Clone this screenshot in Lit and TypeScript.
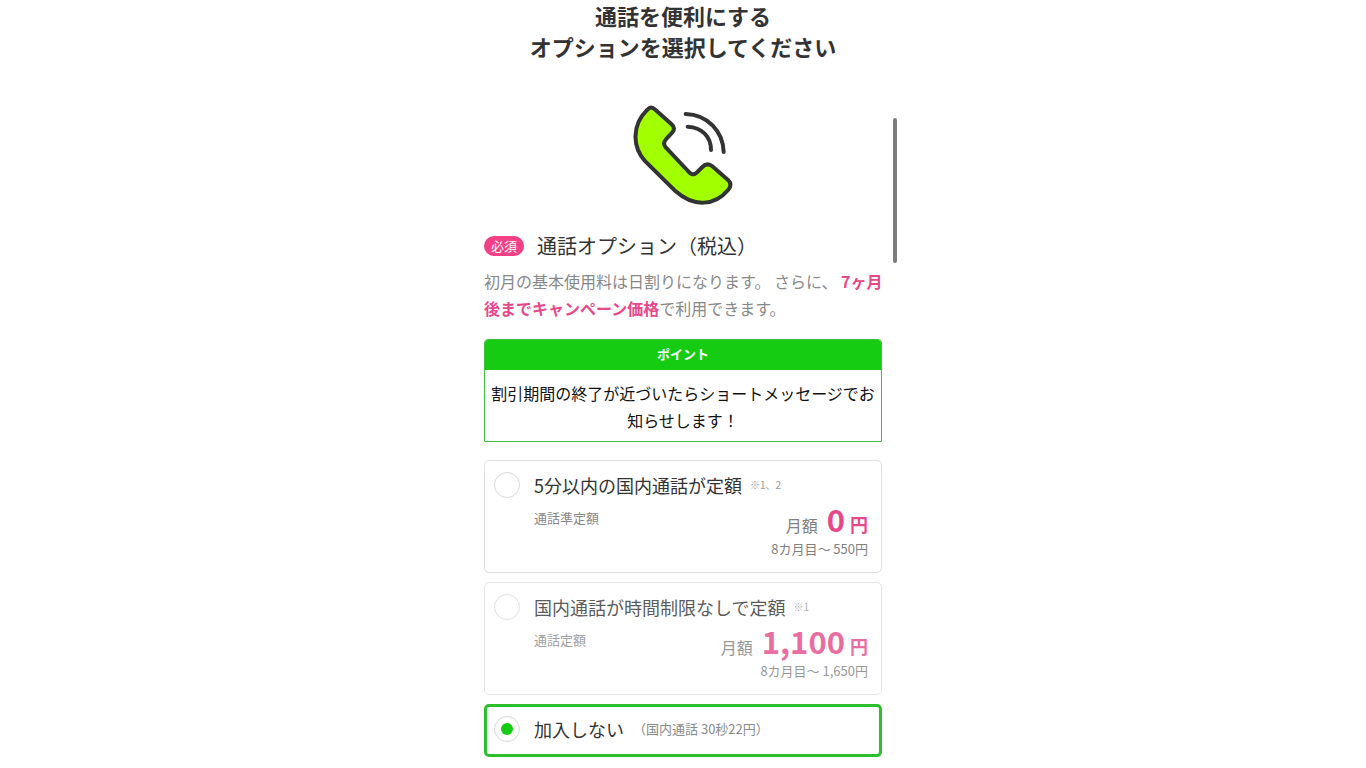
import { LitElement, html, css, nothing } from "lit";
import { customElement, property, state } from "lit/decorators.js";

interface Plan {
  id: string;
  title: string;
  note?: string;
  sub?: string;
  detail?: string;
  price?: string;
  later?: string;
  dimmed?: boolean;
}

const PLANS: Plan[] = [
  { id: "light", title: "5分以内の国内通話が定額", note: "※1、2", sub: "通話準定額", price: "0", later: "8カ月目〜 550円" },
  { id: "full", title: "国内通話が時間制限なしで定額", note: "※1", sub: "通話定額", price: "1,100", later: "8カ月目〜 1,650円", dimmed: true },
  { id: "none", title: "加入しない", detail: "（国内通話 30秒22円）" },
];

@customElement("plan-card")
export class PlanCard extends LitElement {
  @property({ attribute: false }) plan!: Plan;
  @property({ type: Boolean }) selected = false;

  static styles = css`
    :host { display: block; }
    .card {
      box-sizing: border-box;
      display: grid;
      grid-template-columns: 26px 1fr;
      column-gap: 14px;
      padding: 11px 13px 12px 9px;
      border: 1px solid #dfdfdf;
      border-radius: 5px;
      cursor: pointer;
    }
    .selected { border: 3px solid #2cc12c; padding: 9px 11px 12px 7px; }
    .dimmed { opacity: 0.8; }
    .radio {
      appearance: none;
      box-sizing: border-box;
      display: grid;
      place-items: center;
      width: 26px;
      height: 26px;
      margin: 0;
      border: 1px solid #dadada;
      border-radius: 50%;
      background: #fff;
    }
    .radio:checked::before {
      content: "";
      width: 12px;
      height: 12px;
      border-radius: 50%;
      background: #15cc12;
    }
    .title { display: flex; align-items: center; font-size: 18px; line-height: 26px; color: #333; }
    .note { margin-left: 8px; font-size: 10px; color: #999; }
    .detail { margin-left: 9px; font-size: 13px; color: #8a8a8a; }
    .body { grid-column: 2; display: flex; justify-content: space-between; }
    .sub { font-size: 13px; line-height: 20px; color: #888; padding-top: 10px; }
    .cost { display: flex; flex-direction: column; align-items: flex-end; color: #808080; padding-bottom: 1px; }
    .amount { display: flex; align-items: baseline; line-height: 41px; height: 41px; }
    .label { font-size: 16px; margin-right: 9px; }
    .price { font-size: 31px; font-weight: 700; color: #e6498a; }
    .yen { font-size: 18px; font-weight: 700; color: #e6498a; margin-left: 5px; }
    .later { font-size: 13px; line-height: 20px; }
  `;

  private pick() {
    this.dispatchEvent(new CustomEvent("pick", { detail: this.plan.id }));
  }

  render() {
    const p = this.plan;
    const cls = `card ${this.selected ? "selected" : ""} ${p.dimmed ? "dimmed" : ""}`;
    return html`
      <label class=${cls}>
        <input class="radio" type="radio" name="plan" .checked=${this.selected} @change=${this.pick} />
        <span class="title">
          <span>${p.title}</span>
          ${p.note ? html`<span class="note">${p.note}</span>` : nothing}
          ${p.detail ? html`<span class="detail">${p.detail}</span>` : nothing}
        </span>
        ${p.price
          ? html`<span class="body">
              <span class="sub">${p.sub}</span>
              <span class="cost">
                <span class="amount">
                  <span class="label">月額</span><span class="price">${p.price}</span><span class="yen">円</span>
                </span>
                <span class="later">${p.later}</span>
              </span>
            </span>`
          : nothing}
      </label>
    `;
  }
}

@customElement("app-root")
export class AppRoot extends LitElement {
  @state() private chosen = "none";

  static styles = css`
    :host {
      display: block;
      background: #fff;
      color: #333;
      font-family: "Noto Sans CJK JP", sans-serif;
    }
    .page {
      position: relative;
      box-sizing: border-box;
      max-width: 398px;
      margin: 0 auto;
      padding-bottom: 10px;
    }
    .thumb {
      position: absolute;
      top: 118px;
      right: -15px;
      width: 4px;
      height: 145px;
      border-radius: 2px;
      background: #7d7d7d;
    }
    .heading { margin: 0; font-size: 22px; line-height: 31px; font-weight: 700; text-align: center; color: #333; }
    .phone { display: block; width: 104px; height: 104px; margin: 41px auto 25px; }
    .section { display: flex; align-items: center; gap: 13px; }
    .badge {
      width: 40px;
      border-radius: 10px;
      background: #f23f86;
      color: #fff;
      font-size: 13px;
      line-height: 20px;
      text-align: center;
    }
    .name { margin: 0; font-size: 20px; line-height: 28px; font-weight: 400; }
    .lead { margin: 8px 0 17px; font-size: 16px; line-height: 27px; color: #888; white-space: nowrap; }
    .strong { color: #e6498a; font-weight: 700; }
    .point { border: 1px solid #3fbf3f; border-radius: 4px 4px 0 0; overflow: hidden; text-align: center; margin-bottom: 18px; }
    .point-title { margin: 0; padding-bottom: 3px; background: #15cc12; color: #fff; font-size: 13px; line-height: 27px; font-weight: 700; }
    .point-text { margin: 0; padding: 10px 5px 7px; font-size: 16px; line-height: 27px; color: #111; }
    .plans { display: grid; gap: 9px; margin: 0; padding: 0; border: 0; min-width: 0; }
  `;

  render() {
    return html`
      <main class="page">
        <div class="thumb"></div>
        <h1 class="heading">通話を便利にする<br />オプションを選択してください</h1>
        <svg class="phone" viewBox="33 24 312 312" fill="none" stroke="#333" stroke-width="12" stroke-linecap="round" stroke-linejoin="round" aria-hidden="true">
          <path fill="#a2ff00" d="M80 46C92 34 97 36 106 44L154 87Q168 99 157 112L137 134Q127 146 138 158L204 228Q217 246 231 232L247 216Q262 201 277 214L324 255Q338 268 325 284C285 332 222 338 167 289L76 199C36 156 36 90 80 46Z" />
          <path d="M197 57C262 59 309 108 311 171M203 95C246 97 273 125 273 165" />
        </svg>
        <div class="section">
          <span class="badge">必須</span>
          <h2 class="name">通話オプション（税込）</h2>
        </div>
        <p class="lead">
          初月の基本使用料は日割りになります。 さらに、 <span class="strong">7ヶ月<br />後までキャンペーン価格</span>で利用できます。
        </p>
        <section class="point">
          <h3 class="point-title">ポイント</h3>
          <p class="point-text">割引期間の終了が近づいたらショートメッセージでお知らせします！</p>
        </section>
        <fieldset class="plans" aria-label="通話オプション（税込）">
          ${PLANS.map(
            (p) => html`<plan-card
              .plan=${p}
              .selected=${this.chosen === p.id}
              @pick=${(e: CustomEvent) => (this.chosen = e.detail)}
            ></plan-card>`
          )}
        </fieldset>
      </main>
    `;
  }
}
